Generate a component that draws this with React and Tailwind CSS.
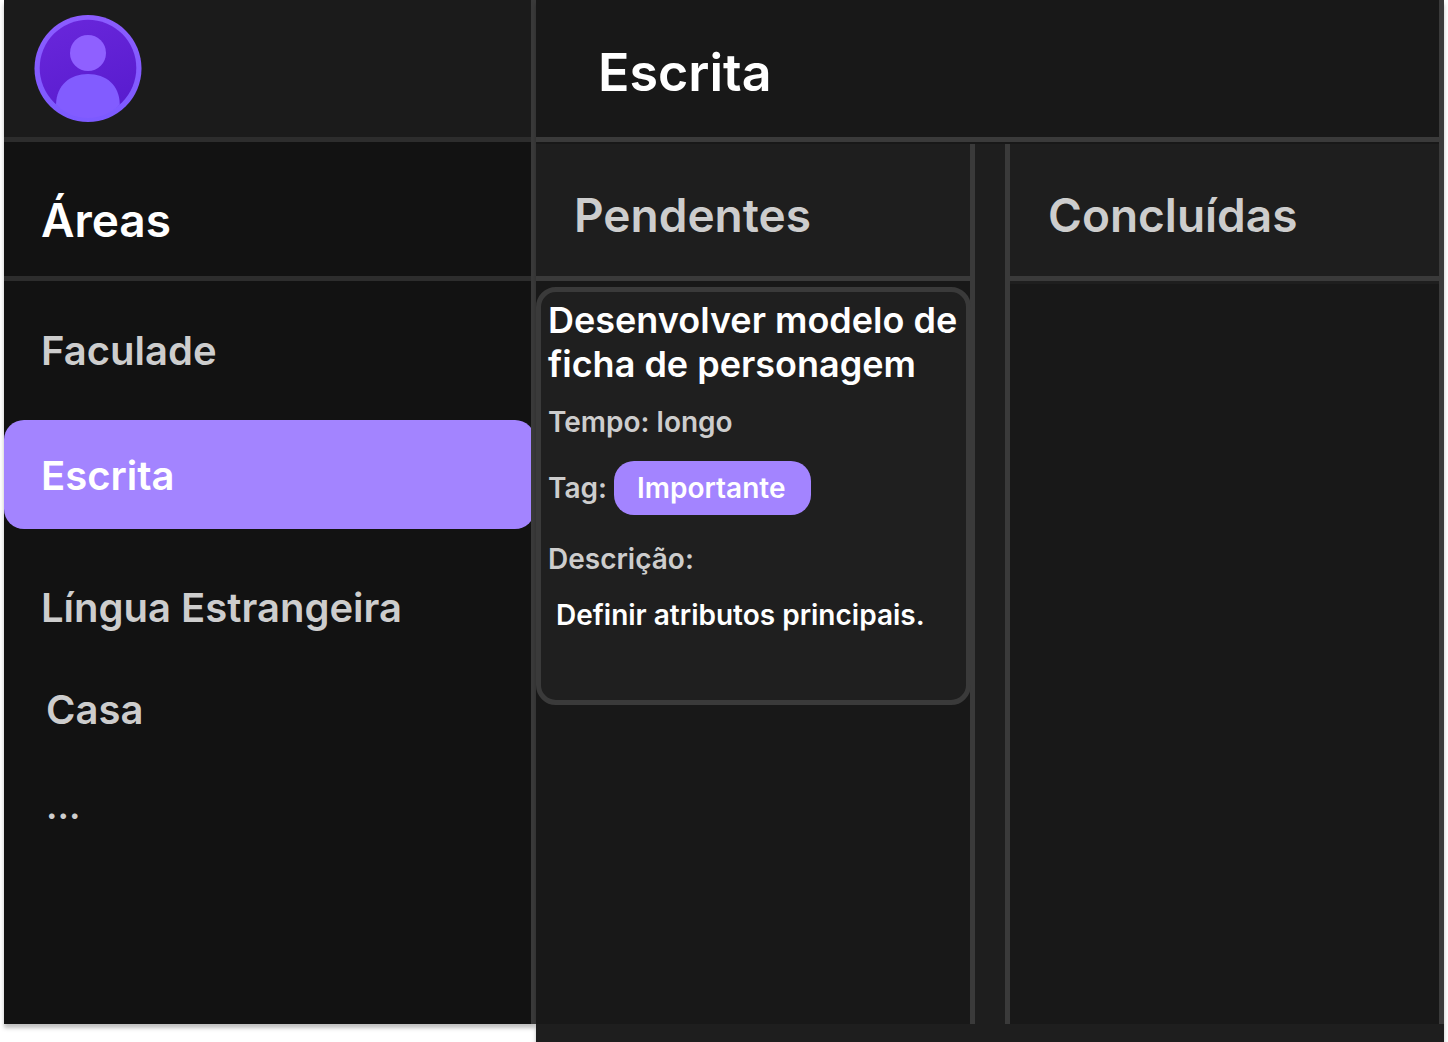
import { useState } from "react";

const areas = [
  { name: "Faculade", box: "h-[139px] pl-[37px] text-[40px]" },
  { name: "Escrita", box: "h-[109px] pt-0.5 pl-[37px] text-[40px]" },
  { name: "Língua Estrangeira", box: "mt-6 h-[109px] pl-[37px] text-[40px]" },
  { name: "Casa", box: "h-24 pl-[42px] text-[40px]" },
  { name: "...", box: "h-24 pl-[42px] text-[36px]" },
];

function Avatar() {
  return (
    <svg className="size-[108px]" viewBox="0 0 108 108" aria-hidden="true">
      <defs>
        <linearGradient id="ring" x1="0" y1="0" x2="0" y2="1">
          <stop offset="0" stopColor="#8b5cff" />
          <stop offset="1" stopColor="#7c5aff" />
        </linearGradient>
        <linearGradient id="disc" x1="0.3" y1="0" x2="0.7" y2="1">
          <stop offset="0" stopColor="#6826da" />
          <stop offset="1" stopColor="#581bce" />
        </linearGradient>
        <clipPath id="round">
          <circle cx="54" cy="54" r="54" />
        </clipPath>
      </defs>
      <circle cx="54" cy="54.500" r="53.500" fill="url(#ring)" />
      <circle cx="54" cy="54" r="48.3" fill="url(#disc)" />
      <circle cx="54" cy="39" r="18" fill="#8f60ff" />
      <path
        d="M22 90.500C22.500 71 36 60 54 60S85.500 71 85.800 90.500C80 97 68 104 54 104S29 98 22 90.500Z"
        fill="#825cff"
        clipPath="url(#round)"
      />
    </svg>
  );
}

function ColumnHeader({ children }) {
  return (
    <h2 className="flex h-[137px] items-center border-b-5 border-[#3a3a3a] bg-[#1e1e1e] pt-2.5 pl-[38px] text-[46px] leading-none font-semibold text-[#cdcdcd]">
      {children}
    </h2>
  );
}

function TaskCard() {
  return (
    <article className="mt-1.5 -mr-px h-[418px] rounded-[20px] border-5 border-[#3a3a3a] bg-[#1f1f1f] pt-1.5 pl-[7px] text-[28px] leading-[34px] font-semibold text-[#cdcdcd]">
      <h3 className="text-[36px] leading-[44px] whitespace-nowrap text-white">
        Desenvolver modelo de
        <br />
        ficha de personagem
      </h3>
      <p className="mt-[19px]">Tempo: longo</p>
      <p className="mt-[22px] flex items-center gap-[7px]">
        Tag:
        <span className="flex h-[54px] items-center rounded-[20px] bg-[#a384ff] pr-[26px] pl-[23px] text-white">
          Importante
        </span>
      </p>
      <p className="mt-[27px]">Descrição:</p>
      <p className="mt-[22px] pl-2 text-white">Definir atributos principais.</p>
    </article>
  );
}

export default function App() {
  const [active, setActive] = useState("Escrita");
  return (
    <div className="flex min-h-screen bg-white pr-1 pl-1 font-['Inter',sans-serif]">
      <aside className="mb-[18px] flex w-[532px] shrink-0 flex-col border-r-5 border-[#3a3a3a] bg-[#121212] shadow-[0_4px_4px_rgba(0,0,0,0.25)]">
        <div className="flex h-[142px] items-start border-b-5 border-[#2d2d2d] bg-[#1b1b1b] pt-3.5 pl-[30px]">
          <button type="button" aria-label="Perfil" className="rounded-full">
            <Avatar />
          </button>
        </div>
        <h2 className="flex h-[139px] items-center border-b-5 border-[#2d2d2d] pt-[22px] pl-[37px] text-[46px] leading-none font-semibold text-white">
          Áreas
        </h2>
        <nav className="overflow-hidden">
          <div className="-mr-1 flex flex-col">
            {areas.map(({ name, box }) => (
              <button
                key={name}
                type="button"
                onClick={() => setActive(name)}
                className={`flex items-center rounded-[20px] text-left leading-none font-semibold ${box} ${
                  active === name ? "bg-[#a384ff] text-white" : "text-[#cdcdcd]"
                }`}
              >
                {name}
              </button>
            ))}
          </div>
        </nav>
      </aside>
      <main className="flex min-w-0 flex-1 flex-col border-b-18 border-[#1e1e1e] bg-[#181818] shadow-[0_4px_4px_rgba(0,0,0,0.25)]">
        <div className="flex flex-1 flex-col border-r-5 border-[#3a3a3a]">
          <header className="mb-0.5 flex h-[142px] items-center border-b-5 border-[#3a3a3a] pt-2 pl-[62px]">
            <h1 className="text-[52px] leading-none font-semibold text-white">Escrita</h1>
          </header>
          <div className="flex flex-1">
            <section className="w-[439px] shrink-0 border-r-5 border-[#3a3a3a]">
              <ColumnHeader>Pendentes</ColumnHeader>
              <TaskCard />
            </section>
            <div className="w-[30px] shrink-0 bg-[#1e1e1e]" />
            <section className="min-w-0 flex-1 border-l-5 border-[#3a3a3a]">
              <div className="border-b-3 border-[#1e1e1e]">
                <ColumnHeader>Concluídas</ColumnHeader>
              </div>
            </section>
          </div>
        </div>
      </main>
    </div>
  );
}
